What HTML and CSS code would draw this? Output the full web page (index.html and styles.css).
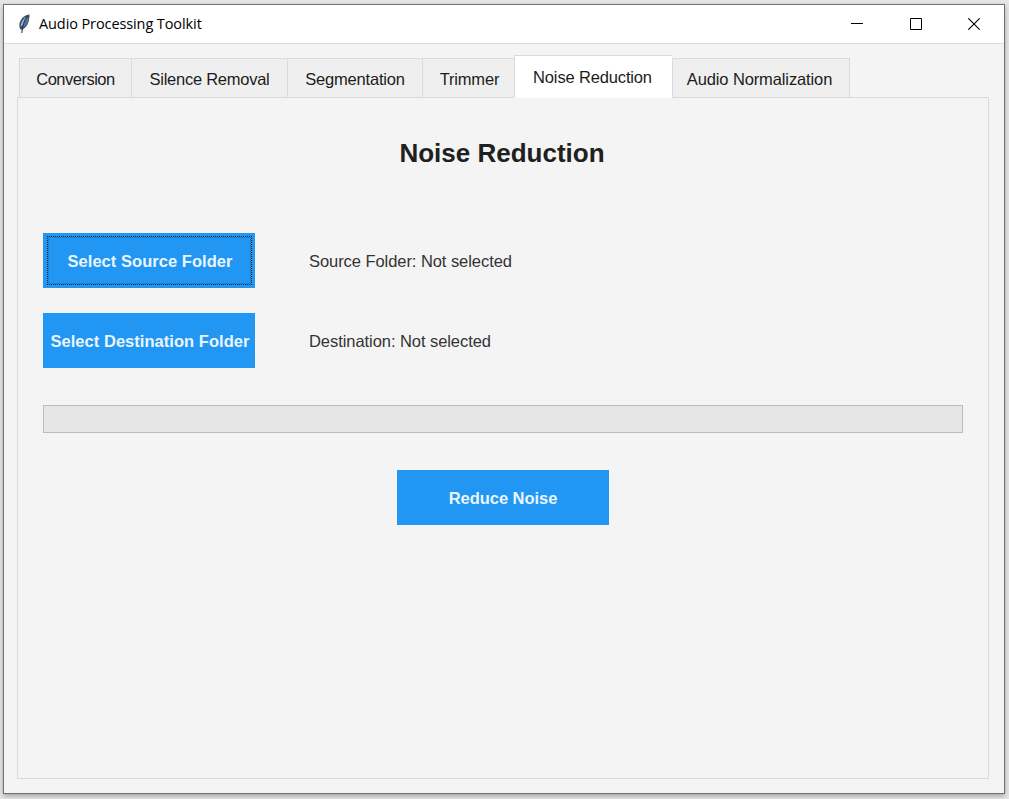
FILE: index.html
```html
<!DOCTYPE html>
<html lang="en">
<head>
<meta charset="utf-8">
<title>Audio Processing Toolkit</title>
<link rel="stylesheet" href="styles.css">
</head>
<body>
<div class="window">
  <header class="titlebar">
    <svg class="feather" width="14" height="22" viewBox="0 0 14 22">
      <path d="M12.500 1.500C8 2 4 5 2.600 10c-.6 3-.2 5 1 6.500l1.800 0C10 14 12.500 9 12.500 1.500z" fill="#3b4d66"/>
      <path d="M9.500 3.500C6.500 5 4 9 3.600 13.500c3-1 5.400-5 5.900-10z" fill="#8fb4df"/>
      <path d="M11 5c-1 4-3 7.500-5.500 9.500" fill="none" stroke="#5c80b0" stroke-width="1.300"/>
      <path d="M9.800 3.500C7 8 5.500 13 4.800 20" fill="none" stroke="#222b38" stroke-width="1"/>
    </svg>
    <h1 class="title"><span>Audio Processing Toolkit</span></h1>
    <div class="controls">
      <svg width="12" height="12" viewBox="0 0 12 12"><path d="M0 5.500h12" stroke="#000"/></svg>
      <svg width="12" height="12" viewBox="0 0 12 12"><path d="M.5.5h11v11H.5z" fill="none" stroke="#000"/></svg>
      <svg width="12" height="12" viewBox="0 0 12 12"><path d="M.3.3l11.400 11.400M11.700.3L.3 11.700" stroke="#000" stroke-width="1.100"/></svg>
    </div>
  </header>
  <main class="client">
    <nav class="tabs">
      <div class="tab conversion"><span>Conversion</span></div>
      <div class="tab silence"><span>Silence Removal</span></div>
      <div class="tab segmentation"><span>Segmentation</span></div>
      <div class="tab trimmer"><span>Trimmer</span></div>
      <div class="tab active"><span>Noise Reduction</span></div>
      <div class="tab normalization"><span>Audio Normalization</span></div>
    </nav>
    <section class="panel">
      <h2 class="heading">Noise Reduction</h2>
      <div class="row">
        <button class="button focused"><span>Select Source Folder</span></button>
        <span class="label">Source Folder: Not selected</span>
      </div>
      <div class="row">
        <button class="button"><span>Select Destination Folder</span></button>
        <span class="label">Destination: Not selected</span>
      </div>
      <div class="progress"></div>
      <button class="button run"><span>Reduce Noise</span></button>
    </section>
  </main>
</div>
</body>
</html>
```
FILE: styles.css
```css
* { box-sizing: border-box; }
body {
  margin: 0;
  height: 799px;
  padding: 4px 4px 5px 3px;
  overflow: hidden;
  background: #e6e6e6;
  font-family: "Liberation Sans", Arial, sans-serif;
}
.window {
  height: 790px;
  display: flex;
  flex-direction: column;
  border: 1px solid #707070;
  background: #f4f4f4;
  width: 1002px;
  box-shadow: 0 2px 5px rgba(0, 0, 0, .3);
}
.titlebar {
  height: 39px;
  display: flex;
  align-items: center;
  padding-left: 13px;
  background: #fff;
  border-bottom: 1px solid #dcdcdc;
}
.feather { margin-top: -1px; }
.title {
  margin: 0 0 2px 8px;
  font: 14.500px "Open Sans", "Noto Sans", sans-serif;
  letter-spacing: -.1px;
  color: #000;
}
.controls {
  display: flex;
  gap: 46.500px;
  margin-left: auto;
  margin-right: 24px;
}
.client {
  flex: 1;
  padding: 12px 15px 14px 13px;
  display: flex;
  flex-direction: column;
}
.tabs {
  position: relative;
  display: flex;
  align-items: flex-end;
  height: 42px;
  padding-left: 2px;
  z-index: 1;
}
.tab {
  height: 40px;
  display: flex;
  align-items: center;
  justify-content: center;
  padding-top: 3px;
  background: #efefef;
  border: 1px solid #dadada;
  border-right: 0;
  font-size: 16.500px;
  color: #1c1c1c;
  white-space: nowrap;
}
.conversion { width: 112px; letter-spacing: -.5px; }
.silence { width: 156px; letter-spacing: -.25px; }
.segmentation { width: 135px; letter-spacing: -.2px; }
.trimmer { width: 92px; letter-spacing: -.2px; padding-left: 2px; }
.tab.active {
  width: 158px;
  height: 43px;
  padding-top: 1px;
  padding-right: 2px;
  background: #fff;
  border-bottom-color: #fff;
  letter-spacing: -.15px;
}
.normalization { width: 178px; border-right: 1px solid #dadada; letter-spacing: -.12px; padding-right: 3px; }
.panel {
  flex: 1;
  margin-top: -1px;
  border: 1px solid #dadada;
  padding: 38px 25px 0;
  display: flex;
  flex-direction: column;
}
.heading {
  margin: 0 0 63px;
  height: 34px;
  line-height: 34px;
  padding-right: 2px;
  text-align: center;
  font-size: 26px;
  color: #202020;
}
.row {
  display: flex;
  align-items: center;
  gap: 54px;
  height: 55px;
  margin-bottom: 25px;
}
.button {
  position: relative;
  flex: none;
  width: 212px;
  height: 55px;
  padding: 2px 0 0 2px;
  border: 0;
  background: #2196f3;
  color: #e9f5ff;
  font: bold 16.500px "Liberation Sans", Arial, sans-serif;
  letter-spacing: .04px;
  white-space: nowrap;
}
.focused::after {
  content: "";
  position: absolute;
  inset: 3px 3px 3px 4px;
  border: 1px dotted #222;
  outline: 1px dotted rgba(20, 40, 60, .35);
  outline-offset: -2px;
}
.label {
  padding-top: 2px;
  font-size: 16.500px;
  color: #333;
  white-space: nowrap;
  letter-spacing: -.06px;
}
.progress {
  height: 28px;
  margin: 12px 0 37px;
  background: #e6e6e6;
  border: 1px solid #bcbcbc;
}
.run { align-self: center; padding-left: 0; letter-spacing: -.05px; }
```
